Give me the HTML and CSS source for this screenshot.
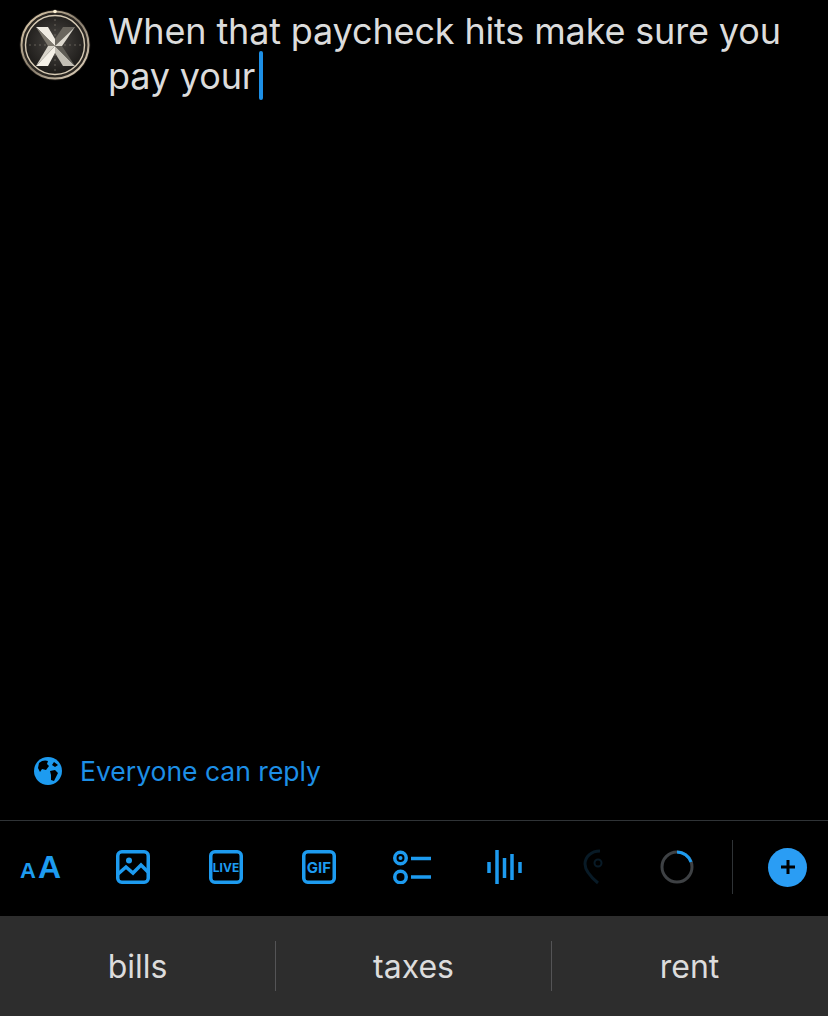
FILE: index.html
```html
<!DOCTYPE html>
<html lang="en">
<head>
    <meta charset="UTF-8">
    <meta name="viewport" content="width=device-width, initial-scale=1.0">
    <title>Compose</title>
    <link rel="stylesheet" href="styles.css">
</head>
<body>
    <div class="screen">
        <div class="composer">
            <svg class="avatar" viewBox="0 0 72 72" width="72" height="72">
                <defs>
                    <radialGradient id="disc" cx="50%" cy="45%" r="55%">
                        <stop offset="0" stop-color="#4a4743"/>
                        <stop offset="1" stop-color="#1c1a18"/>
                    </radialGradient>
                    <linearGradient id="rim" x1="0" y1="0" x2="1" y2="1">
                        <stop offset="0" stop-color="#ecd9b8"/>
                        <stop offset="0.5" stop-color="#857a6a"/>
                        <stop offset="1" stop-color="#efe0c8"/>
                    </linearGradient>
                </defs>
                <circle cx="36" cy="36" r="35.500" fill="#1a1714"/>
                <circle cx="36" cy="36" r="33.500" fill="#2b2722" stroke="url(#rim)" stroke-width="2"/>
                <circle cx="36" cy="36" r="29.500" fill="url(#disc)" stroke="#d8ccb6" stroke-width="1.400"/>
                <path d="M36 10V62M10 36H62" stroke="#8d877d" stroke-width=".6" stroke-dasharray="2 3"/>
                <path d="M17 18H29L36 30V37Z" fill="#efebe2"/>
                <path d="M17 18L36 37H29Z" fill="#7d786e"/>
                <path d="M56 18H44L36 30V37Z" fill="#6a665e"/>
                <path d="M56 18L36 37H43Z" fill="#dcd8ce"/>
                <path d="M17 57H29L36 44V37Z" fill="#f4f0e7"/>
                <path d="M17 57L36 37H29Z" fill="#d8d4ca"/>
                <path d="M56 57H44L36 44V37Z" fill="#c2beb4"/>
                <path d="M56 57L36 37H43Z" fill="#5f5c55"/>
                <circle cx="36" cy="2.500" r="1.800" fill="#fff3d6"/>
            </svg>
            <p class="draft">When that paycheck hits make sure you pay your<span class="caret"></span></p>
        </div>

        <div class="reply-setting">
            <svg class="globe" viewBox="0 0 28 28" width="28" height="28">
                <circle cx="14" cy="14" r="14" fill="#1d9bf0"/>
                <path d="M5 6C8 3 12 3 14 4L13 7L15 9L12 13L8 12L6 15L4 11ZM16 14L21 13L24 16L20 24L17 23L17 18ZM20 5L24 8L21 10L18 8Z" fill="#000"/>
            </svg>
            <span class="reply-label">Everyone can reply</span>
        </div>

        <div class="toolbar">
            <div class="tool tool-text"><span class="a-small">A</span><span class="a-big">A</span></div>
            <div class="tool">
                <svg viewBox="0 0 34 34" width="34" height="34" fill="none" stroke="#1d9bf0" stroke-width="3.500">
                    <rect x="1.750" y="1.750" width="30.500" height="30.500" rx="4"/>
                    <circle cx="13" cy="10.500" r="3" fill="#1d9bf0" stroke="none"/>
                    <path d="M2 24L10 17L17 23L25 15L32 22"/>
                </svg>
            </div>
            <div class="tool">
                <svg viewBox="0 0 34 34" width="34" height="34">
                    <rect class="tag-frame" x="1.750" y="1.750" width="30.500" height="30.500" rx="4"/>
                    <text class="tag-text tag-live" x="17" y="21.500">LIVE</text>
                </svg>
            </div>
            <div class="tool">
                <svg viewBox="0 0 34 34" width="34" height="34">
                    <rect class="tag-frame" x="1.750" y="1.750" width="30.500" height="30.500" rx="4"/>
                    <text class="tag-text" x="17" y="22.500">GIF</text>
                </svg>
            </div>
            <div class="tool">
                <svg viewBox="0 0 38 34" width="38" height="34" fill="none" stroke="#1d9bf0" stroke-width="3.500">
                    <circle cx="7.500" cy="8" r="5.750"/>
                    <circle cx="7.500" cy="8" r="2" fill="#1d9bf0" stroke="none"/>
                    <circle cx="7.500" cy="27" r="5.750"/>
                    <path d="M18 8.500H38M18 27H38"/>
                </svg>
            </div>
            <div class="tool">
                <svg viewBox="0 0 36 34" width="36" height="34" fill="none" stroke="#1d9bf0" stroke-width="3.500">
                    <path d="M2 12V23M10 0V34M17.500 8V28M25 4V30M33 12V23"/>
                </svg>
            </div>
            <div class="tool tool-dim">
                <svg viewBox="0 0 20 36" width="20" height="36" fill="none" stroke="#081a26" stroke-width="3">
                    <path d="M17 2C8 2 2 8 2 15C2 22 9 29 15 34"/>
                    <circle cx="15" cy="14" r="3.500" stroke-width="2"/>
                </svg>
            </div>
            <div class="tool tool-ring">
                <svg viewBox="0 0 34 34" width="34" height="34" fill="none" stroke-width="3">
                    <circle cx="17" cy="17" r="15" stroke="#3e4144"/>
                    <path d="M17 2A15 15 0 0 1 31 12" stroke="#1d9bf0"/>
                </svg>
            </div>
            <div class="tool-divider"></div>
            <div class="add-btn">
                <svg viewBox="0 0 16 16" width="16" height="16">
                    <path d="M8 1V15M1 8H15" stroke="#000" stroke-width="3"/>
                </svg>
            </div>
        </div>

        <div class="suggestions">
            <div class="suggestion">bills</div>
            <div class="suggestion">taxes</div>
            <div class="suggestion">rent</div>
        </div>
    </div>
</body>
</html>
```

FILE: styles.css
```css
body {
    margin: 0;
    background: #000;
    font-family: Inter, "Liberation Sans", sans-serif;
}
.screen {
    width: 828px;
    height: 1016px;
    display: flex;
    flex-direction: column;
    overflow: hidden;
}
.composer {
    flex: 1;
    display: flex;
    gap: 17px;
    padding: 9px 30px 0 19px;
}
.avatar {
    flex: none;
}
.draft {
    margin: 0;
    width: 690px;
    font-size: 36px;
    line-height: 45px;
    color: #dcdcdc;
    letter-spacing: -0.15px;
}
.caret {
    display: inline-block;
    width: 4px;
    height: 49px;
    margin: -8px 0 -8px 4px;
    border-radius: 2px;
    background: #1d8fe6;
    vertical-align: -3px;
}
.reply-setting {
    display: flex;
    align-items: center;
    gap: 18px;
    padding: 0 0 29px 34px;
}
.reply-label {
    font-size: 26.500px;
    line-height: 40px;
    color: #1d8fe6;
}
.toolbar {
    display: flex;
    align-items: center;
    gap: 53px;
    box-sizing: border-box;
    height: 96px;
    padding: 0 0 3px 20px;
    border-top: 1px solid #2f3336;
}
.tool {
    flex: none;
    width: 40px;
    display: flex;
    justify-content: center;
}
.tool-text {
    align-items: baseline;
    justify-content: flex-start;
    gap: 2px;
    color: #1d9bf0;
    font-weight: 700;
    font-family: "Liberation Sans", sans-serif;
}
.a-small {
    font-size: 22px;
}
.a-big {
    font-size: 32px;
}
.tag-frame {
    fill: none;
    stroke: #1d9bf0;
    stroke-width: 3.500;
}
.tag-text {
    fill: #1d9bf0;
    font-size: 15px;
    font-weight: 700;
    text-anchor: middle;
}
.tag-live {
    font-size: 12px;
}
.tool-dim {
    justify-content: flex-start;
    padding-left: 5px;
    box-sizing: border-box;
}
.tool-ring {
    margin-left: -14px;
}
.tool-divider {
    flex: none;
    width: 1px;
    height: 54px;
    margin-left: -18px;
    background: #2f3336;
}
.add-btn {
    flex: none;
    width: 39px;
    height: 39px;
    margin-left: -18px;
    border-radius: 50%;
    background: #2a9df4;
    display: flex;
    align-items: center;
    justify-content: center;
}
.suggestions {
    height: 100px;
    display: flex;
    align-items: center;
    padding-right: 1px;
    background: #2d2d2d;
}
.suggestion {
    flex: 1;
    height: 50px;
    display: flex;
    align-items: center;
    justify-content: center;
    font-size: 32px;
    color: #dcdcdc;
    border-left: 1px solid #545456;
}
.suggestion:first-child {
    border-left: 0;
}
```
